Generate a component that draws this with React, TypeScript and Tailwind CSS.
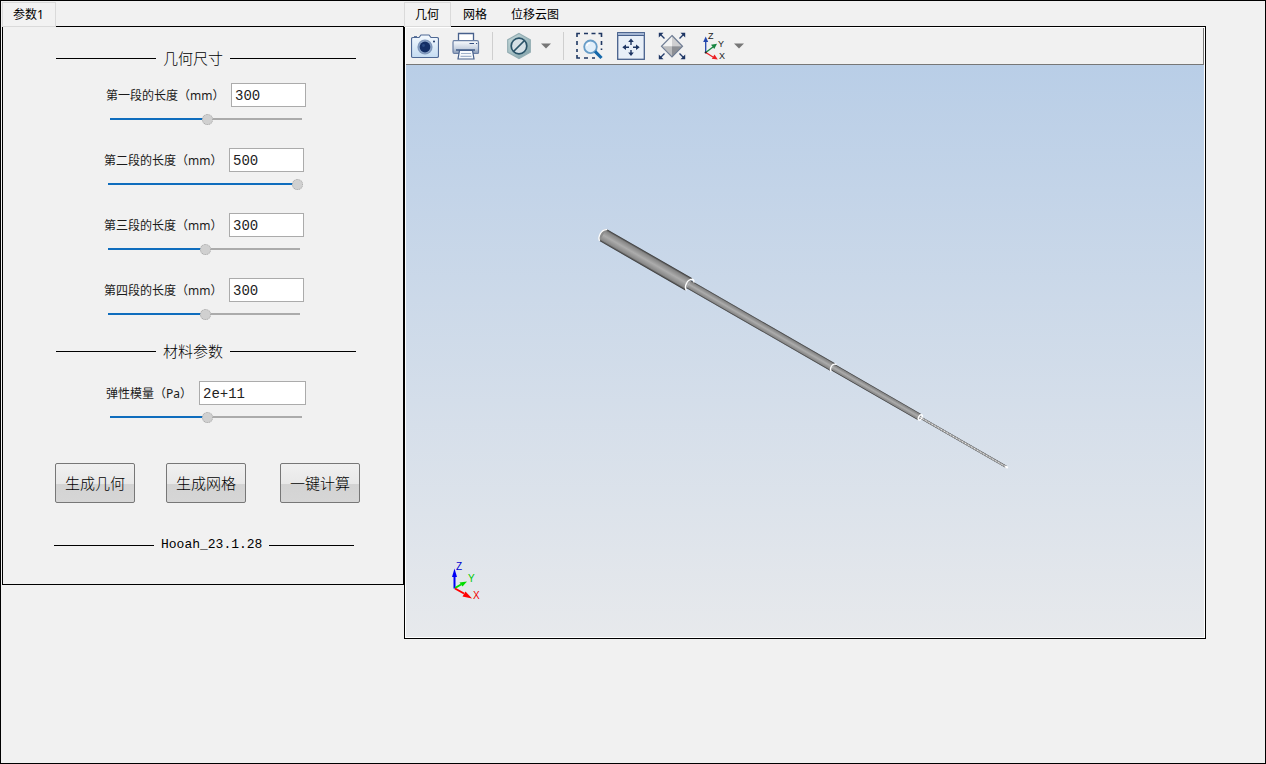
import { useState } from 'react';
import type { ReactNode } from 'react';

const SectionTitle = ({ children, className }: { children: ReactNode; className: string }) => (
  <div className={`flex w-[300px] items-center leading-5 ${className}`}>
    <span className="w-[100px] border-t border-black"></span>
    <h2 className="px-[7px] font-light whitespace-nowrap">{children}</h2>
    <span className="flex-1 border-t border-black"></span>
  </div>
);

interface FieldProps {
  id: string;
  label: string;
  initial: string;
  min: number;
  max: number;
  className: string;
  inputClass: string;
}

const SliderField = ({ id, label, initial, min, max, className, inputClass }: FieldProps) => {
  const [value, setValue] = useState(initial);
  const num = Number(value) || min;
  const percent = ((num - min) / (max - min)) * 100;

  return (
    <div className={`w-[200px] ${className}`}>
      <div className="flex items-center justify-between">
        <label htmlFor={id} className="pt-[2px] text-xs whitespace-nowrap text-[#1a1a1a]">{label}</label>
        <input
          id={id}
          type="text"
          value={value}
          onChange={(e) => setValue(e.target.value)}
          className={`h-6 border border-[#ababab] bg-white px-[3px] pt-[2px] font-['Liberation_Mono','Noto_Sans_CJK_SC',monospace] text-sm text-[#222222] outline-none ${inputClass}`}
        />
      </div>
      <input
        type="range"
        aria-label={label}
        min={min}
        max={max}
        step="any"
        value={num}
        onChange={(e) => {
          const next = Number(e.target.value);
          setValue(max > 1e6 ? next.toExponential(2) : String(Math.round(next)));
        }}
        className="mt-[6px] ml-1 block h-3 w-[195px] appearance-none bg-[length:192px_2px] bg-[position:left_center] bg-no-repeat outline-none [&::-webkit-slider-thumb]:h-[11px] [&::-webkit-slider-thumb]:w-[11px] [&::-webkit-slider-thumb]:appearance-none [&::-webkit-slider-thumb]:rounded-full [&::-webkit-slider-thumb]:border [&::-webkit-slider-thumb]:border-dotted [&::-webkit-slider-thumb]:border-[#a8a8a8] [&::-webkit-slider-thumb]:bg-[#d0d0d0]"
        style={{ backgroundImage: `linear-gradient(to right, #0f6dbd ${percent}%, #ababab ${percent}%)` }}
      />
    </div>
  );
};

const ActionButton = ({ children, className = '' }: { children: ReactNode; className?: string }) => (
  <button
    type="button"
    className={`h-10 w-20 rounded-xs border border-[#777777] bg-[linear-gradient(#f0f0f0,#e8e8e8_52%,#d3d3d3_52%,#d6d6d6)] text-[15px] leading-5 font-light whitespace-nowrap ${className}`}
  >
    {children}
  </button>
);

const Tab = ({ active = false, children }: { active?: boolean; children: ReactNode }) => (
  <button
    type="button"
    role="tab"
    aria-selected={active}
    className={
      active
        ? 'h-[25px] border border-[#dadada] bg-[#f2f2f2] pt-px pr-[11px] pl-[10px] text-xs'
        : 'h-[25px] px-3 pt-px text-xs'
    }
  >
    {children}
  </button>
);

const ToolButton = ({ label, className = '', children }: { label: string; className?: string; children: ReactNode }) => (
  <button type="button" aria-label={label} className={`shrink-0 ${className}`}>
    <svg width="28" height="28" viewBox="0 0 28 28" className="block">{children}</svg>
  </button>
);

const MenuArrow = ({ label, className = '' }: { label: string; className?: string }) => (
  <button type="button" aria-label={label} className={`shrink-0 ${className}`}>
    <svg width="10" height="6" viewBox="0 0 10 6" className="block">
      <path d="M0 0.5H10L5 5.5Z" fill="#777" />
    </svg>
  </button>
);

const CameraIcon = () => (
  <>
    <defs>
      <linearGradient id="camBody" x1="0" y1="0" x2="0" y2="1">
        <stop offset="0" stopColor="#f4f9fe" />
        <stop offset="1" stopColor="#c5dcf2" />
      </linearGradient>
    </defs>
    <path d="M2 5.5H8L10 3H18L20 5.5H26Q27.5 5.5 27.5 7V24Q27.5 25.5 26 25.5H2Q0.5 25.5 0.5 24V7Q0.5 5.5 2 5.5Z" fill="url(#camBody)" stroke="#4e6894" strokeWidth="1.2" />
    <path d="M3 4.8H6" stroke="#4e6894" strokeWidth="1.4" />
    <circle cx="14" cy="15" r="7.6" fill="#7f97bb" />
    <circle cx="14" cy="15" r="6.2" fill="#8fa8cb" />
    <circle cx="14" cy="15" r="5.4" fill="#132f66" />
    <circle cx="12.5" cy="13.5" r="1.4" fill="#2a4a83" />
    <circle cx="23" cy="9.5" r="1" fill="#1d3768" />
  </>
);

const PrinterIcon = () => (
  <>
    <defs>
      <linearGradient id="printBody" x1="0" y1="0" x2="0" y2="1">
        <stop offset="0" stopColor="#fbfcfe" />
        <stop offset="0.6" stopColor="#c8d2e1" />
        <stop offset="1" stopColor="#8496b3" />
      </linearGradient>
    </defs>
    <path d="M6.5 10V1.5H21.5V10" fill="#fff" stroke="#47608c" strokeWidth="1.3" />
    <path d="M2 8.7H25Q26.5 8.7 26.5 10.5V20.5Q26.5 21.5 25.5 21.5H2.5Q1 21.5 1 20V10.5Q1 8.7 2 8.7Z" fill="url(#printBody)" stroke="#6a7fa4" strokeWidth="1.2" />
    <path d="M17.5 11.5H22M24 11.5H25.2" stroke="#354f80" strokeWidth="1.2" />
    <path d="M4 18H23" stroke="#415b88" strokeWidth="1.5" />
    <path d="M7.5 18.5H20.5L22 27H6Z" fill="#f8fafc" stroke="#47608c" strokeWidth="1.2" />
    <path d="M9 21.5H19M8.5 24.3H19.5" stroke="#a2b3cb" strokeWidth="1.2" />
  </>
);

const HexIcon = () => (
  <>
    <defs>
      <linearGradient id="hexFill" x1="0" y1="0" x2="1" y2="1">
        <stop offset="0" stopColor="#c8dcdd" />
        <stop offset="1" stopColor="#7fa0a8" />
      </linearGradient>
    </defs>
    <path d="M14 1.5L25.3 7.8V20.2L14 26.5L2.7 20.2V7.8Z" fill="url(#hexFill)" stroke="#93adb3" strokeWidth="1.2" />
    <circle cx="14" cy="14" r="7.8" fill="#d5e0e6" stroke="#2a5368" strokeWidth="1.7" />
    <path d="M8.5 19.5L19.5 8.5" stroke="#2a5368" strokeWidth="1.7" />
  </>
);

const ZoomAreaIcon = () => (
  <>
    <path d="M2 5V1.5H5M9 1.5H13M16.5 1.5H20.5M23.5 1.5H26.5V5M26.5 9V13M26.5 16.5V18M2 9V13M2 17V20M2 23V26H5M9 26H13M17 26H20" fill="none" stroke="#1f3762" strokeWidth="1.6" />
    <circle cx="15.5" cy="14.8" r="6.3" fill="#deeffb" fillOpacity="0.85" stroke="#679dc8" strokeWidth="1.8" />
    <path d="M11.8 14Q12 11.2 15 10.8" fill="none" stroke="#fff" strokeWidth="1.3" />
    <path d="M20 19.3L26.5 26" stroke="#1568aa" strokeWidth="3.2" />
  </>
);

const FitWindowIcon = () => (
  <>
    <rect x="0.7" y="0.7" width="26.6" height="26.6" fill="#e8eff8" stroke="#47608c" strokeWidth="1.3" />
    <rect x="1" y="1" width="26" height="2" fill="#a3b5d2" />
    <path d="M1 3.5H27" stroke="#47608c" />
    <path d="M14 9V13M14 18V22M8 15.3H12M16 15.3H20" stroke="#1d3563" strokeWidth="1.4" />
    <path d="M14 6.5L16.8 10H11.2ZM14 24L16.8 20.5H11.2ZM5.3 15.3L9 12.5V18.1ZM22.7 15.3L19 12.5V18.1Z" fill="#1d3563" />
  </>
);

const FitAllIcon = () => (
  <>
    <path d="M14 3.5L3.5 14.3L14 14.3Z" fill="#f2f2f2" />
    <path d="M14 3.5L24.5 14.3H14Z" fill="#cfcfd1" />
    <path d="M3.5 14.3H14V25Z" fill="#bbbcbe" />
    <path d="M24.5 14.3H14V25Z" fill="#8d8f94" />
    <path d="M14 3.5L24.5 14.3L14 25L3.5 14.3Z" fill="none" stroke="#6f7d94" strokeWidth="1.2" />
    <path d="M2 2L6.5 6.5M26 2L21.500 6.500M2 26L6.500 21.500M26 26L21.500 21.500" stroke="#243d6c" strokeWidth="1.4" />
    <path d="M0.8 0.8H5.5L0.8 5.5ZM27.2 0.8H22.5L27.2 5.5ZM0.8 27.2H5.5L0.8 22.5ZM27.2 27.2H22.5L27.2 22.5Z" fill="#1d3563" />
  </>
);

const AxesIcon = () => (
  <>
    <path d="M4.7 20.5V9" stroke="#2347ad" strokeWidth="1.3" />
    <path d="M4.7 4.5L7.2 10H2.2Z" fill="#2347ad" />
    <path d="M4.7 20.5L12 15" stroke="#178540" strokeWidth="1.3" />
    <path d="M16 11.8L13.3 17L10 12.8Z" fill="#178540" />
    <path d="M4.7 20.5L12 25" stroke="#ec2024" strokeWidth="1.3" />
    <path d="M16.8 27.5L10.8 26.8L13.5 22.5Z" fill="#ec2024" />
    <circle cx="4.7" cy="20.5" r="1.1" fill="#222" />
    <g fill="#222" fontSize="9" fontFamily="Liberation Sans, sans-serif">
      <text x="7" y="7">Z</text>
      <text x="17" y="14.5">Y</text>
      <text x="18" y="27">X</text>
    </g>
  </>
);

// stepped rod, measured along its own axis
const segments = [
  { x: 0, length: 99, radius: 7 },
  { x: 99, length: 166, radius: 4.5 },
  { x: 265, length: 100, radius: 3.5 },
  { x: 365, length: 100, radius: 1.2 },
];

const Viewport = () => (
  <svg viewBox="406 65 798 572" className="block w-full bg-[linear-gradient(#b9cee7,#e7e9ec)]" role="img" aria-label="几何模型">
    <defs>
      <linearGradient id="rod" x1="0" y1="0" x2="0" y2="1">
        <stop offset="0" stopColor="#303030" />
        <stop offset="0.15" stopColor="#858585" />
        <stop offset="0.5" stopColor="#acacac" />
        <stop offset="0.85" stopColor="#888888" />
        <stop offset="1" stopColor="#303030" />
      </linearGradient>
    </defs>
    <g transform="translate(603 235) rotate(29.9)">
      <ellipse cx="0" cy="0" rx="3" ry="6.8" fill="#8c8c8c" />
      {segments.map((s) => (
        <rect key={s.x} x={s.x} y={-s.radius} width={s.length} height={s.radius * 2} fill="url(#rod)" />
      ))}
      <path d="M365 0H465" stroke="#f4f4f4" strokeWidth="0.8" strokeDasharray="1.5 2" />
      <g fill="none" stroke="#fff" strokeWidth="1.3">
        <path d="M1 -6.8Q-3 -5 -3 0Q-3 5 0 6.8" />
        <path d="M100 -6.5Q96 -4 96.5 0Q96.5 5 100 6.5M100 -6.5Q102 -6 102.5 -4" />
        <path d="M267 -4.2Q263 -3 263.5 0Q263.5 4 266 4.5" />
        <ellipse cx="366" cy="0" rx="1.6" ry="3" />
        <path d="M464 0H467" strokeWidth="2" />
      </g>
    </g>
    <g strokeWidth="2" fill="none">
      <path d="M454.5 588.5V576" stroke="#0000f5" />
      <path d="M454.5 568.5L457 577H452Z" fill="#0000f5" stroke="none" />
      <path d="M455 588L461 584.5" stroke="#00dc00" />
      <path d="M467 581.5L462.5 586.5L459.5 582.5Z" fill="#00dc00" stroke="none" />
      <path d="M455 588.5L464 593.5" stroke="#ff0000" />
      <path d="M472 598.5L462.5 596.5L465.5 591.5Z" fill="#ff0000" stroke="none" />
    </g>
    <g fontFamily="Liberation Sans, sans-serif" fontSize="10">
      <text x="456" y="570" fill="#0000d0">Z</text>
      <text x="468" y="582" fill="#00c800">Y</text>
      <text x="473" y="599" fill="#f00000">X</text>
    </g>
  </svg>
);

const ParameterPanel = () => (
  <section className="border border-black pt-[21px] pb-[29px]">
    <SectionTitle className="ml-[53px] text-[15px]">几何尺寸</SectionTitle>
    <div className="mt-[15px] flex flex-col gap-[23px]">
      <SliderField id="len1" label="第一段的长度（mm）" initial="300" min={100} max={500} className="ml-[103px]" inputClass="w-[75px]" />
      <SliderField id="len2" label="第二段的长度（mm）" initial="500" min={100} max={500} className="ml-[101px]" inputClass="w-[75px]" />
      <SliderField id="len3" label="第三段的长度（mm）" initial="300" min={100} max={500} className="ml-[101px]" inputClass="w-[75px]" />
      <SliderField id="len4" label="第四段的长度（mm）" initial="300" min={100} max={500} className="ml-[101px]" inputClass="w-[75px]" />
    </div>
    <SectionTitle className="mt-[21px] ml-[53px] text-[15px]">材料参数</SectionTitle>
    <SliderField id="modulus" label="弹性模量（Pa）" initial="2e+11" min={1e11} max={3e11} className="mt-5 ml-[103px]" inputClass="w-[107px]" />
    <div className="mt-10 ml-[52px] flex">
      <ActionButton>生成几何</ActionButton>
      <ActionButton className="ml-[31px]">生成网格</ActionButton>
      <ActionButton className="ml-[34px]">一键计算</ActionButton>
    </div>
    <SectionTitle className="mt-8 ml-[51px] font-['Liberation_Mono',monospace] text-[13px]">Hooah_23.1.28</SectionTitle>
  </section>
);

const Toolbar = () => (
  <div className="flex h-[37px] items-center border-r border-b border-[#777777] bg-[#f1f1f1]">
    <ToolButton label="截图" className="ml-[5px]"><CameraIcon /></ToolButton>
    <ToolButton label="打印" className="ml-[13px]"><PrinterIcon /></ToolButton>
    <span className="ml-3 h-7 border-l border-[#cfcfcf]"></span>
    <ToolButton label="隐藏" className="ml-3"><HexIcon /></ToolButton>
    <MenuArrow label="隐藏选项" className="ml-2" />
    <span className="ml-3 h-7 border-l border-[#cfcfcf]"></span>
    <ToolButton label="框选放大" className="ml-[11px]"><ZoomAreaIcon /></ToolButton>
    <ToolButton label="适应窗口" className="ml-[14px]"><FitWindowIcon /></ToolButton>
    <ToolButton label="显示全部" className="ml-[13px]"><FitAllIcon /></ToolButton>
    <ToolButton label="视图方向" className="ml-[15px]"><AxesIcon /></ToolButton>
    <MenuArrow label="视图选项" className="ml-[5px]" />
  </div>
);

const App = () => {
  return (
    <main className="flex min-h-screen items-start border border-black bg-[#f1f1f1] pt-px pr-[59px] pl-px font-['Noto_Sans','Noto_Sans_CJK_SC',sans-serif] text-black">
      <div className="w-[402px] shrink-0">
        <div role="tablist" className="relative -mb-px flex">
          <Tab active>参数1</Tab>
        </div>
        <ParameterPanel />
      </div>

      <div className="min-w-0 flex-1">
        <div role="tablist" className="relative -mb-px flex">
          <Tab active>几何</Tab>
          <Tab>网格</Tab>
          <Tab>位移云图</Tab>
        </div>
        <section className="border border-black bg-white p-px">
          <Toolbar />
          <Viewport />
        </section>
      </div>
    </main>
  );
};

export default App;
